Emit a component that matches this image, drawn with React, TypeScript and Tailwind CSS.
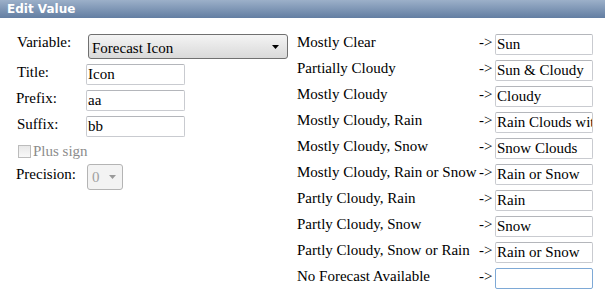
const rows: [string, string][] = [
  ['Mostly Clear', 'Sun'],
  ['Partially Cloudy', 'Sun & Cloudy'],
  ['Mostly Cloudy', 'Cloudy'],
  ['Mostly Cloudy, Rain', 'Rain Clouds wit'],
  ['Mostly Cloudy, Snow', 'Snow Clouds'],
  ['Mostly Cloudy, Rain or Snow', 'Rain or Snow'],
  ['Partly Cloudy, Rain', 'Rain'],
  ['Partly Cloudy, Snow', 'Snow'],
  ['Partly Cloudy, Snow or Rain', 'Rain or Snow'],
  ['No Forecast Available', ''],
];

function TextBox({ value, width = 'w-[99px]', focus = false }: { value: string; width?: string; focus?: boolean }) {
  return (
    <div
      className={`${width} h-[21px] bg-white border rounded-[2px] pl-[1px] flex items-center overflow-hidden whitespace-nowrap text-black ${
        focus ? 'border-[#7ea9d6]' : 'border-[#c9cbd0] border-t-[#b4b6bb]'
      }`}
    >
      {value}
    </div>
  );
}

export default function App() {
  return (
    <div className="w-[605px] h-[299px] bg-white overflow-hidden font-['Liberation_Serif',serif] text-[15px] leading-[17px] text-black">
      {/* Header */}
      <div className="h-[18px] bg-gradient-to-b from-[#9cb0c9] to-[#637ea2] px-[7px] flex items-center">
        <span className="font-['DejaVu_Sans',sans-serif] font-bold text-[12px] text-white">Edit Value</span>
      </div>

      <div className="flex pt-[16px]">
        {/* Left form */}
        <div className="w-[297px] pl-[17px] flex flex-col">
          <div className="flex h-[25px]">
            <span className="w-[71px]">Variable:</span>
            <div className="w-[200px] h-[25px] border border-[#707070] rounded-[3px] bg-gradient-to-b from-[#f4f4f4] to-[#d9d9d9] flex items-center pl-[3px] pr-[8px] justify-between">
              <span className="mt-[3px]">Forecast Icon</span>
              <svg width="7" height="4" viewBox="0 0 7 4">
                <path d="M0 0h7L3.5 4z" fill="#000" />
              </svg>
            </div>
          </div>
          <div className="flex mt-[5px]">
            <span className="w-[69px]">Title:</span>
            <TextBox value="Icon" />
          </div>
          <div className="flex mt-[5px] -ml-[1px]">
            <span className="w-[70px]">Prefix:</span>
            <TextBox value="aa" />
          </div>
          <div className="flex mt-[5px]">
            <span className="w-[69px]">Suffix:</span>
            <TextBox value="bb" />
          </div>
          <div className="flex items-center mt-[6px] ml-[1px] text-[#8c8c8c]">
            <div className="w-[13px] h-[13px] border border-[#bcbcbc] bg-gradient-to-b from-[#e8e8e8] to-[#f8f8f8]" />
            <span className="ml-[2px]">Plus sign</span>
          </div>
          <div className="flex mt-[4px] -ml-[1px]">
            <span className="w-[71px] mt-[2px]">Precision:</span>
            <div className="w-[36px] h-[26px] border border-[#b4b4b4] rounded-[3px] bg-[#f3f3f3] flex items-center pl-[4px] pr-[6px] justify-between text-[#a0a0a0]">
              <span>0</span>
              <svg width="7" height="4" viewBox="0 0 7 4">
                <path d="M0 0h7L3.5 4z" fill="#9a9a9a" />
              </svg>
            </div>
          </div>
        </div>

        {/* Right mapping list */}
        <div className="grid grid-cols-[182px_16px_98px] gap-y-[5px]">
          {rows.map(([label, value], i) => (
            <div key={i} className="contents">
              <span className="whitespace-nowrap">{label}</span>
              <span>-&gt;</span>
              <TextBox value={value} width="w-[98px]" focus={i === rows.length - 1} />
            </div>
          ))}
        </div>
      </div>
    </div>
  );
}
